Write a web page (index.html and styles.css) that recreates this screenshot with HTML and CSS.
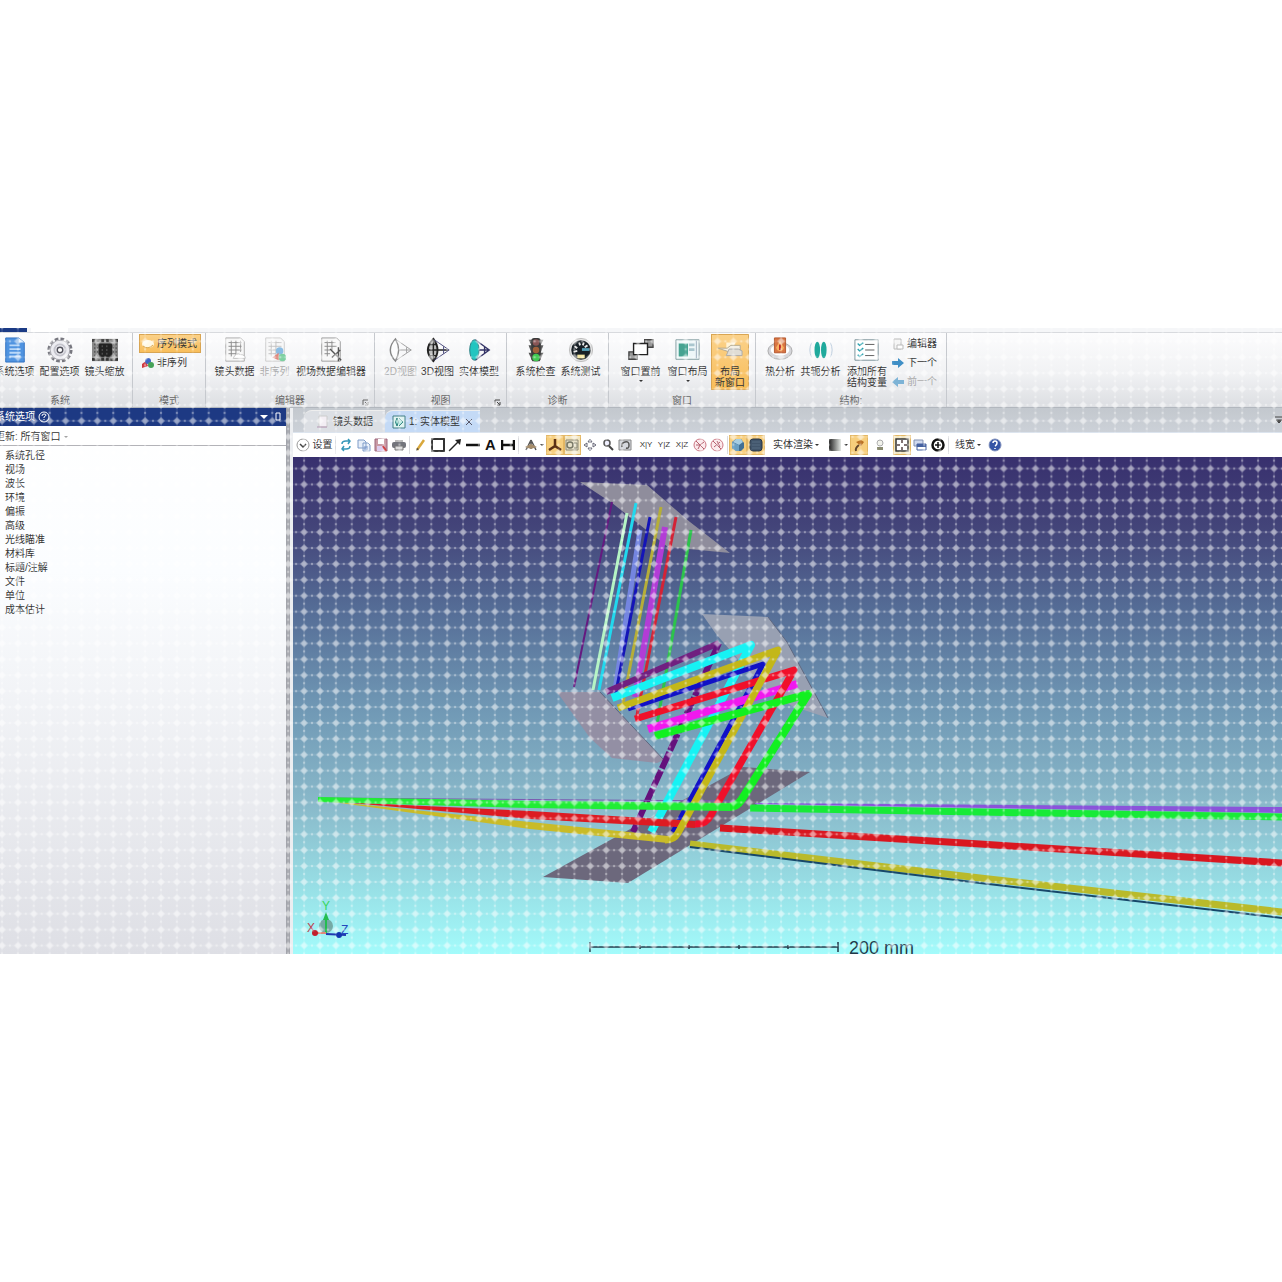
FILE: index.html
```html
<!DOCTYPE html>
<html lang="zh-Hans">
<head>
<meta charset="utf-8">
<title>实体模型</title>
<link rel="stylesheet" href="styles.css">
</head>
<body>
<div class="app">
  <div class="menu-strip"><span class="menu-file"></span><span class="menu-active"></span></div>
  <header class="ribbon">
    <section class="group g-system">
      <div class="tools">
        <button class="tool"><svg class="ico" viewBox="0 0 28 28"><path d="M4 1h14l6 5v21H4z" fill="#4f93e0" stroke="#2f6fc0"/><path d="M18 1v5h6z" fill="#d5e8fb"/><path d="M8 9h11M8 13h12M8 17h12M8 21h12" stroke="#b9d8f8" stroke-width="2"/></svg><span>系统选项</span></button>
        <button class="tool"><svg class="ico" viewBox="0 0 28 28"><circle cx="14" cy="14" r="12" fill="none" stroke="#77777f" stroke-width="3" stroke-dasharray="4 2.3"/><circle cx="14" cy="14" r="10.5" fill="#ececf1" stroke="#a0a0a8"/><circle cx="14" cy="14" r="6" fill="none" stroke="#c4c4cc" stroke-width="2"/><circle cx="14" cy="14" r="3" fill="#fff" stroke="#52525c" stroke-width="1.5"/></svg><span>配置选项</span></button>
        <button class="tool"><svg class="ico" viewBox="0 0 28 28"><path d="M0 2h28v24H0z" fill="#888"/><path d="M7 7h15v15H7z" fill="#222"/><path d="M0 4h28M0 24h28" stroke="#333" stroke-width="3" stroke-dasharray="3 2"/><path d="M3 7v15M6 7v15M23 7v15M26 7v15" stroke="#444" stroke-dasharray="2 2"/><path d="M11 9v11M16 9v11" stroke="#666" stroke-dasharray="2 2"/></svg><span>镜头缩放</span></button>
      </div>
      <h2>系统</h2>
    </section>
    <section class="group g-mode">
      <div class="stack">
        <button class="row selected"><svg class="mini" viewBox="0 0 12 12"><ellipse cx="6" cy="6" rx="6" ry="4" fill="#fff8e4"/><path d="M1 8q5 4 10-1" fill="none" stroke="#d9a850"/></svg><span>序列模式</span></button>
        <button class="row"><svg class="mini" viewBox="0 0 12 12"><path d="M0 7l4-3 2 5-6 2z" fill="#cf3940"/><circle cx="6" cy="4" r="3" fill="#3f66c4"/><circle cx="9" cy="8" r="3" fill="#45a258"/></svg><span>非序列</span></button>
      </div>
      <h2>模式</h2>
    </section>
    <section class="group g-editor">
      <div class="tools">
        <button class="tool"><svg class="ico" viewBox="0 0 28 28"><path d="M4 1h16l4 4v21H4z" fill="#f7f7f7" stroke="#aaa"/><path d="M7 6h14M7 10h14M7 14h14M7 18h8M10 4v17M15 4v17M20 4v12" stroke="#888"/><path d="M12 23q3-7 8-4 5 0 5 4z" fill="#fff" stroke="#bbb"/></svg><span>镜头数据</span></button>
        <button class="tool" disabled><svg class="ico" viewBox="0 0 28 28"><path d="M4 1h16l4 4v21H4z" fill="#f7f7f7" stroke="#bbb"/><path d="M7 6h14M7 10h14M7 14h14M7 18h8M10 4v17M15 4v17" stroke="#aaa"/><circle cx="19" cy="15" r="4" fill="#5da4da"/><path d="M11 22l7-5v8z" fill="#d85b4a"/><circle cx="22" cy="22" r="4" fill="#4cc07d"/></svg><span>非序列</span></button>
        <button class="tool"><svg class="ico" viewBox="0 0 28 28"><path d="M4 1h16l4 4v21H4z" fill="#f7f7f7" stroke="#999"/><path d="M7 6h12M7 10h13M7 14h6M7 18h6M10 4v17M15 4v10" stroke="#888"/><path d="M13 13l12 12M24 14l-9 8M22 11v15" stroke="#555" stroke-width="1.5"/></svg><span>视场数据编辑器</span></button>
      </div>
      <h2>编辑器</h2>
      <svg class="launcher" viewBox="0 0 7 7"><path d="M1 6V1h5M3 3l3 3V3M6 6H3" fill="none" stroke="#666"/></svg>
    </section>
    <section class="group g-view">
      <div class="tools">
        <button class="tool" disabled><svg class="ico" viewBox="0 0 28 28"><path d="M8 2q-11 12 0 24 7-12 0-24z" fill="#fff" stroke="#555" stroke-width="1.5"/><path d="M9 3l16 11L9 25M12 14h13M20 11v6" fill="none" stroke="#777"/></svg><span>2D视图</span></button>
        <button class="tool"><svg class="ico" viewBox="0 0 28 28"><path d="M9 2q-12 12 0 24 9-12 0-24z" fill="#bbb" stroke="#222" stroke-width="2"/><path d="M9 2v24M4 8h9M3 14h22M4 20h9" stroke="#222" stroke-width="1.5"/><path d="M10 3l16 11L10 25M20 10v8" fill="none" stroke="#447"/></svg><span>3D视图</span></button>
        <button class="tool"><svg class="ico" viewBox="0 0 28 28"><path d="M10 3l15 11L10 25M10 14h15M20 10v8" fill="none" stroke="#336" stroke-width="1.5"/><ellipse cx="9" cy="14" rx="5" ry="11" fill="#22c5c0" stroke="#267b80"/></svg><span>实体模型</span></button>
      </div>
      <h2>视图</h2>
      <svg class="launcher" viewBox="0 0 7 7"><path d="M1 6V1h5M3 3l3 3V3M6 6H3" fill="none" stroke="#444"/></svg>
    </section>
    <section class="group g-diag">
      <div class="tools">
        <button class="tool"><svg class="ico" viewBox="0 0 28 28"><path d="M6 3h16l-3 6h3l-3 8h3l-4 9h-8l-4-9h3L6 9h3z" fill="#555"/><rect x="9" y="1" width="10" height="25" rx="3" fill="#3b3b3b"/><circle cx="14" cy="6" r="3.5" fill="#855"/><circle cx="14" cy="14" r="3.5" fill="#a0603a"/><circle cx="14" cy="22" r="4" fill="#3fc850"/></svg><span>系统检查</span></button>
        <button class="tool"><svg class="ico" viewBox="0 0 28 28"><circle cx="14" cy="14" r="12.5" fill="#e4e4e4" stroke="#bbb"/><circle cx="14" cy="14" r="10.5" fill="#171f25"/><path d="M7 10l3 2M21 9l-3 2M6 16l4-1M12 6l1 3M17 6l-1 3" stroke="#e8e8e8" stroke-width="2"/><path d="M15 12h8v3h-8z" fill="#55a0b8"/><path d="M10 19h8v4h-8z" fill="#f5e7a0"/></svg><span>系统测试</span></button>
      </div>
      <h2>诊断</h2>
    </section>
    <section class="group g-window">
      <div class="tools">
        <button class="tool"><svg class="ico" viewBox="0 0 28 28"><path d="M18 3h9v8h-9zM1 16h9v8H1z" fill="#999" stroke="#444" stroke-width="1.5"/><path d="M6 7h15v12H6z" fill="#fff" stroke="#222" stroke-width="1.5"/></svg><span>窗口置前</span><i class="caret"></i></button>
        <button class="tool"><svg class="ico" viewBox="0 0 28 28"><path d="M1 3h25v21H1z" fill="#eef7f8" stroke="#7f9b9e"/><path d="M4 7h10v14H4z" fill="#46a391"/><path d="M15 7h6v3h-6zM15 12h6v3h-6z" fill="#a9c6ce"/><path d="M23 4v19" stroke="#9ab"/></svg><span>窗口布局</span><i class="caret"></i></button>
        <button class="tool selected"><svg class="ico" viewBox="0 0 28 28"><path d="M10 6h10l-3 6H10z" fill="#fff3d8"/><path d="M1 12h10l4-3h10v7H13z" fill="#f4f0e6" stroke="#b1a78f"/><path d="M10 20h17v-5l-4-2H13z" fill="#e0ddd5" stroke="#aaa"/></svg><span>布局<br>新窗口</span></button>
      </div>
      <h2>窗口</h2>
    </section>
    <section class="group g-struct">
      <div class="tools">
        <button class="tool"><svg class="ico" viewBox="0 0 28 28"><ellipse cx="14" cy="15" rx="13" ry="9" fill="#d6d6da" stroke="#aaa"/><ellipse cx="14" cy="14" rx="10" ry="6" fill="#fff"/><path d="M8 1h12v16H8z" fill="#d87543" stroke="#b2552c"/><path d="M14 4l4 7q0 4-4 4t-4-4z" fill="#f8b060"/><path d="M14 8v6" stroke="#b22" stroke-width="2"/></svg><span>热分析</span></button>
        <button class="tool"><svg class="ico" viewBox="0 0 28 28"><ellipse cx="10" cy="14" rx="3" ry="9" fill="#20a99c"/><ellipse cx="17" cy="14" rx="3" ry="9" fill="#20a99c"/><path d="M4 6q-4 8 0 16M24 6q4 8 0 16" fill="none" stroke="#bcd"/></svg><span>共轭分析</span></button>
        <button class="tool"><svg class="ico" viewBox="0 0 28 28"><path d="M1 3h25v22H1z" fill="#fff" stroke="#758c94"/><path d="M12 8h10M12 14h10M12 20h10" stroke="#555"/><path d="M4 7l2 2 4-3M4 13l2 2 4-3M4 19l2 2 4-3" fill="none" stroke="#25a0ae" stroke-width="1.5"/></svg><span>添加所有<br>结构变量</span></button>
        <div class="stack">
          <button class="row"><svg class="mini" viewBox="0 0 12 12"><path d="M2 1h7v10H2z" fill="#f5f5f5" stroke="#bbb"/><path d="M5 7h6v4H5z" fill="#fff" stroke="#bbb"/></svg><span>编辑器</span></button>
          <button class="row"><svg class="mini" viewBox="0 0 12 12"><path d="M0 4h6V1l6 5-6 5V8H0z" fill="#3f8fc6"/></svg><span>下一个</span></button>
          <button class="row" disabled><svg class="mini" viewBox="0 0 12 12"><path d="M12 4H6V1L0 6l6 5V8h6z" fill="#4f9bcc"/></svg><span>前一个</span></button>
        </div>
      </div>
      <h2>结构:</h2>
    </section>
  </header>

  <div class="work">
    <aside class="side">
      <div class="side-title"><span>系统选项</span><svg class="help" viewBox="0 0 12 12"><circle cx="6" cy="6" r="5" fill="none" stroke="#fff"/><path d="M4 5q0-2 2-2t2 1q0 1-2 2v1M6 8v1" fill="none" stroke="#fff"/></svg><span class="fill"></span><svg class="pin" viewBox="0 0 22 12"><path d="M0 4h8L4 8z" fill="#fff"/><path d="M16 2h4v7h-4z" fill="none" stroke="#fff"/></svg></div>
      <div class="side-update"><button>更新: 所有窗口 <i class="caret"></i></button></div>
      <ul class="side-list">
        <li>系统孔径</li><li>视场</li><li>波长</li><li>环境</li><li>偏振</li><li>高级</li><li>光线瞄准</li><li>材料库</li><li>标题/注解</li><li>文件</li><li>单位</li><li>成本估计</li>
      </ul>
    </aside>
    <div class="splitter"></div>
    <main class="doc">
      <div class="tabs">
        <button class="tab"><svg class="tab-ico" viewBox="0 0 14 14"><path d="M3 1h8v11H3z" fill="#f3eef4" stroke="#ccc"/><path d="M1 12h10" stroke="#b598b5"/></svg><span>镜头数据</span></button>
        <button class="tab active"><svg class="tab-ico" viewBox="0 0 14 14"><path d="M1 1h12v12H1z" fill="#dff3f0" stroke="#437f86"/><path d="M5 3q-3 4 0 8q3-4 0-8zM7 3l4 4-4 4" fill="#8fdccf" stroke="#287f7b"/></svg><span>1: 实体模型</span><svg class="close" viewBox="0 0 8 8"><path d="M1 1l6 6M7 1L1 7" stroke="#556"/></svg></button>
        <span class="fill"></span><svg class="tab-more" viewBox="0 0 8 8"><path d="M1 1h7M2 4h6L5 7z" fill="#444" stroke="#444"/></svg>
      </div>
      <div class="toolbar">
        <button class="settings"><svg class="t" viewBox="0 0 14 14"><circle cx="7" cy="7" r="6" fill="#fff" stroke="#999"/><path d="M4 6l3 3 3-3" fill="none" stroke="#444" stroke-width="1.5"/></svg><span>设置</span></button>
        <span class="sep"></span>
        <div class="set w-file">
          <button aria-label="刷新"><svg class="t" viewBox="0 0 14 14"><path d="M3 6q0-3 4-3h3M9 1l2 2-2 3M11 8q0 3-4 3H4M5 8l-2 3 2 2" fill="none" stroke="#3597b8" stroke-width="1.5"/></svg></button>
          <button aria-label="复制"><svg class="t" viewBox="0 0 14 14"><path d="M1 2h6l2 2v6H1zM6 5h5l2 2v6H6z" fill="#e6eef9" stroke="#7f9cc8"/><path d="M7 9h4M7 11h4" stroke="#7090c8"/></svg></button>
          <button aria-label="保存"><svg class="t" viewBox="0 0 14 14"><path d="M1 1h12v12H1z" fill="#c99aa5" stroke="#9c667d"/><path d="M4 1h6v5H4z" fill="#fff"/><path d="M3 8h8v5H3z" fill="#dce"/><path d="M9 8l3 5" stroke="#c33" stroke-width="2"/></svg></button>
          <button aria-label="打印"><svg class="t" viewBox="0 0 14 14"><path d="M3 2h8v3H3z" fill="#bbb"/><rect x="0" y="4" width="14" height="6" rx="2" fill="#73757c"/><path d="M3 8h8v4H3z" fill="#ddd" stroke="#777"/></svg></button>
        </div>
        <span class="sep"></span>
        <div class="set w-draw">
          <button aria-label="铅笔"><svg class="t" viewBox="0 0 14 14"><path d="M4 12L11 2" stroke="#d9a83c" stroke-width="2.5"/><path d="M3 13l1-3 2 1z" fill="#444"/></svg></button>
          <button aria-label="矩形"><svg class="t" viewBox="0 0 14 14"><path d="M1 1h12v12H1z" fill="#fff" stroke="#333" stroke-width="2"/></svg></button>
          <button aria-label="箭头"><svg class="t" viewBox="0 0 14 14"><path d="M1 13L11 3" stroke="#222" stroke-width="1.5"/><path d="M7 2l6-1-1 6z" fill="#222"/></svg></button>
          <button aria-label="直线"><svg class="t" viewBox="0 0 14 14"><path d="M0 7h14" stroke="#111" stroke-width="2.5"/></svg></button>
          <button class="letter">A</button>
          <button aria-label="尺寸"><svg class="t" viewBox="0 0 14 14"><path d="M1 2v10M13 2v10M1 7h12" stroke="#111" stroke-width="2.5"/></svg></button>
        </div>
        <span class="sep"></span>
        <button class="drop" aria-label="相机"><svg class="t" viewBox="0 0 14 14"><path d="M7 2l-5 10M7 2l5 10M7 4v7" stroke="#555" stroke-width="1.5"/><path d="M1 9l6-3 6 3-6 2z" fill="#a58c6a"/></svg><i class="caret"></i></button>
        <div class="set w-nav">
          <button class="on" aria-label="坐标轴"><svg class="t" viewBox="0 0 14 14"><path d="M7 1v7L1 12M7 8l6 4" fill="none" stroke="#5a2f14" stroke-width="2.5"/></svg></button>
          <button class="on pale" aria-label="相机锁定"><svg class="t" viewBox="0 0 14 14"><path d="M1 2h12v10H1z" fill="#e6e0c8" stroke="#8e8874"/><circle cx="5" cy="7" r="3" fill="none" stroke="#776" stroke-width="1.5"/><path d="M9 5h3v5H9" fill="none" stroke="#887"/></svg></button>
          <button aria-label="平移"><svg class="t" viewBox="0 0 14 14"><path d="M7 1l2 3H5zM7 13l2-3H5zM1 7l3-2v4zM13 7l-3-2v4z" fill="#fff" stroke="#667"/></svg></button>
          <button aria-label="缩放"><svg class="t" viewBox="0 0 14 14"><circle cx="6" cy="5" r="3" fill="#eef" stroke="#555" stroke-width="1.5"/><path d="M8 8l4 4" stroke="#444" stroke-width="2"/></svg></button>
          <button aria-label="旋转"><svg class="t" viewBox="0 0 14 14"><path d="M1 2h12v10H1z" fill="#d5d8de" stroke="#888"/><path d="M4 9q-1-4 3-5t4 3-3 3" fill="none" stroke="#555" stroke-width="1.5"/></svg></button>
        </div>
        <div class="set w-plane"><button>X|Y</button><button>Y|Z</button><button>X|Z</button></div>
        <div class="set w-rot">
          <button aria-label="隐藏光线"><svg class="t" viewBox="0 0 14 14"><circle cx="7" cy="7" r="6" fill="#fbeaec" stroke="#cc7885"/><path d="M3 3l8 8M3 7h4l4-3M7 7l-2 4" stroke="#b4606e" fill="none"/></svg></button>
          <button aria-label="隐藏面"><svg class="t" viewBox="0 0 14 14"><circle cx="7" cy="7" r="6" fill="#fbeaec" stroke="#cc7885"/><path d="M3 3l8 8M4 9l6-5M7 3l3 6" stroke="#b4606e" fill="none"/></svg></button>
        </div>
        <span class="sep"></span>
        <div class="set w-solid">
          <button class="on" aria-label="立方体"><svg class="t" viewBox="0 0 14 14"><path d="M5 1h5l3 4v5l-3 3H5l-4-3V4z" fill="#426f94"/><path d="M5 1h5l2 3-4 3-6-3z" fill="#a6cde2"/><path d="M1 4l7 3v6H5l-4-3z" fill="#6aa0c4"/></svg></button>
          <button class="on" aria-label="背景"><svg class="t" viewBox="0 0 14 14"><rect x="1" y="1" width="12" height="12" rx="3" fill="#41556b" stroke="#263445"/><path d="M3 4h8M3 7h8M3 10h8" stroke="#566d82"/></svg></button>
        </div>
        <button class="drop render">实体渲染<i class="caret"></i></button>
        <button class="drop" aria-label="渐变"><svg class="t" viewBox="0 0 14 14"><defs><linearGradient id="shade"><stop stop-color="#222"/><stop offset="1" stop-color="#e4e8e4"/></linearGradient></defs><path d="M1 1h12v12H1z" fill="url(#shade)"/></svg><i class="caret"></i></button>
        <div class="set one"><button class="on" aria-label="画笔"><svg class="t" viewBox="0 0 14 14"><path d="M4 13q-1-3 3-6" fill="none" stroke="#63462a" stroke-width="2"/><path d="M4 4l5-2 3 2-3 4z" fill="#b96f22"/></svg></button></div>
        <div class="set one lamp"><button aria-label="灯光"><svg class="t" viewBox="0 0 14 14"><circle cx="7" cy="5" r="3" fill="#f2f3ec" stroke="#aaa"/><path d="M4 9h6v3H4z" fill="#8a8b70"/></svg></button></div>
        <div class="set w-fit">
          <button class="on pale" aria-label="适合窗口"><svg class="t" viewBox="0 0 14 14"><path d="M1 1h12v12H1z" fill="#fff" stroke="#333" stroke-width="1.5"/><path d="M7 2v3M7 9v3M2 7h3M9 7h3" stroke="#544" stroke-width="1.5"/></svg></button>
          <button aria-label="窗口层叠"><svg class="t" viewBox="0 0 14 14"><path d="M1 2h9v6H1z" fill="#cfd8ee" stroke="#8390b0"/><path d="M4 6h9v6H4z" fill="#fff" stroke="#4460a0"/><path d="M4 6h9v3H4z" fill="#4460a0"/></svg></button>
          <button aria-label="目标"><svg class="t" viewBox="0 0 14 14"><circle cx="7" cy="7" r="5.5" fill="#fff" stroke="#111" stroke-width="2.5"/><path d="M7 4v6M4 7h6" stroke="#111" stroke-width="1.5"/></svg></button>
        </div>
        <span class="sep"></span>
        <button class="drop width">线宽<i class="caret"></i></button>
        <div class="set one"><button aria-label="帮助"><svg class="t" viewBox="0 0 14 14"><circle cx="7" cy="7" r="6" fill="#3454a6" stroke="#8292bd"/><path d="M5 5q0-2 2-2t2 2-2 3M7 10v1" fill="none" stroke="#fff" stroke-width="1.5"/></svg></button></div>
      </div>
      <svg class="scene" viewBox="293 457 989 497" role="img" aria-label="实体模型">
        <defs><linearGradient id="sky" x1="0" y1="0" x2="0" y2="1"><stop stop-color="#38306e"/><stop offset=".14" stop-color="#434479"/><stop offset=".3" stop-color="#546b95"/><stop offset=".5" stop-color="#6f97b4"/><stop offset=".7" stop-color="#89b9ca"/><stop offset=".87" stop-color="#98e0e6"/><stop offset="1" stop-color="#a3fbfb"/></linearGradient></defs>
        <path d="M293 457h989v497H293z" fill="url(#sky)"/>
        <g fill="#8f8d9c">
          <path d="M580 482L647 485 690 522 730 553 668 547 612 503z"/>
          <path d="M702 614L768 617 787 642 828 718 792 706 765 690 716 634z" fill="#98a0b2"/>
          <path d="M557 692L600 692 664 760 657 763 612 758 590 738z" fill="#938fa4"/>
          <path d="M810 772L743 767 543 877 628 883z" fill="#6c687c"/>
          <path d="M768 617L787 642 828 718M600 692L664 760" fill="none" stroke="#5f6880"/>
        </g>
        <g fill="none" stroke-width="3">
          <path d="M612 502L574 687" stroke="#651a80" stroke-width="2"/>
          <path d="M627 513L593 690" stroke="#b4f4c4"/>
          <path d="M636 503L599 690" stroke="#20d8ee"/>
          <path d="M640 530L615 690" stroke="#7485e0" stroke-width="5"/>
          <path d="M650 517L615 697" stroke="#1414b8"/>
          <path d="M661 507L623 703" stroke="#b5ae38"/>
          <path d="M665 527L635 697" stroke="#b23cd6" stroke-width="6"/>
          <path d="M676 517L637 715" stroke="#d32336"/>
          <path d="M691 530L656 730" stroke="#2cc34c"/>
        </g>
        <g fill="none" stroke-linejoin="round">
          <path d="M606 692L719 643" stroke="#702080" stroke-width="6"/>
          <path d="M719 643L633 832" stroke="#64117c" stroke-width="6" stroke-dasharray="18 2"/>
          <path d="M755 803L1282 807V813L755 804z" fill="#8a54da"/>
          <path d="M318 798L735 801" stroke="#7b5ab0"/>
          <path d="M612 698L751 645 651 832" stroke="#16f2f4" stroke-width="8"/>
          <path d="M628 709L763 664 673 832" stroke="#1111c6" stroke-width="5"/>
          <path d="M648 729L797 684" stroke="#f018ee" stroke-width="8"/>
          <path d="M635 719L794 670 711 815Q706 825 695 824" stroke="#f0102a" stroke-width="7"/>
          <path d="M340 802L530 811 695 821V828L530 819z" fill="#dc1b22"/>
          <path d="M720 828L980 844 1282 863" stroke="#d91720" stroke-width="7"/>
          <path d="M618 708L778 650 678 833Q674 840 665 840" stroke="#c3b719" stroke-width="7"/>
          <path d="M318 800L530 822 668 836V843L530 829z" fill="#c9bb28"/>
          <path d="M690 844L980 878 1282 912" stroke="#b9ba2b" stroke-width="7"/>
          <path d="M690 847L980 883 1282 918" stroke="#174769" stroke-width="2"/>
          <path d="M655 736L808 694 742 799Q737 807 729 807" stroke="#12f020" stroke-width="8"/>
          <path d="M318 797L530 801 730 803V811L530 808 318 802z" fill="#20ed35"/>
          <path d="M750 808L980 812 1282 817" stroke="#18ea38" stroke-width="7"/>
        </g>
        <g font-family="Liberation Sans, Arial, sans-serif" font-size="12">
          <circle cx="326" cy="926" r="7" fill="#76aaa5"/>
          <path d="M326 933V914" stroke="#24bd50" stroke-width="2"/><path d="M323 920l3-8 3 8z" fill="#24bd50"/>
          <path d="M315 933h11" stroke="#d87" stroke-width="2"/><circle cx="315" cy="933" r="3" fill="#c21e2c"/>
          <path d="M326 934l20 1" stroke="#2038b0" stroke-width="2"/><circle cx="339" cy="935" r="3" fill="#1236b0"/>
          <text x="322" y="910" fill="#37d65c">Y</text><text x="307" y="932" fill="#bd4050">X</text><text x="341" y="934" fill="#2448bd">Z</text>
        </g>
        <path d="M590 947h248M590 942v10M640 945v4M689 945v4M739 945v4M788 945v4M838 942v10" stroke="#203848" stroke-width="1.5"/>
        <text x="849" y="954" font-family="Liberation Sans, Arial, sans-serif" font-size="18" fill="#203848">200 mm</text>
      </svg>
    </main>
  </div>
  <svg class="mesh" aria-hidden="true">
    <defs><pattern id="lattice" width="15.9" height="15.9" patternUnits="userSpaceOnUse" x="-6" y="5.4">
      <path d="M8 0v16M0 8h16" stroke="#fff" stroke-opacity=".16"/>
      <path d="M8 4L12 8 8 12 4 8z" fill="#fff" fill-opacity=".36"/>
      <circle cx="8" cy="8" r="2.5" fill="#fff" fill-opacity=".22"/>
      <circle cx="0" cy="8" r="1.2" fill="#fff" fill-opacity=".36"/><circle cx="15.9" cy="8" r="1.2" fill="#fff" fill-opacity=".36"/>
      <circle cx="8" cy="0" r="1.2" fill="#fff" fill-opacity=".36"/><circle cx="8" cy="15.9" r="1.2" fill="#fff" fill-opacity=".36"/>
    </pattern></defs>
    <rect width="100%" height="100%" fill="url(#lattice)"/>
  </svg>
</div>
</body>
</html>
```
FILE: styles.css
```css
* { box-sizing: border-box; }
body {
  margin: 0;
  padding-top: 328px;
  background: #fff;
  color: #333;
  font: 10px/12px "Liberation Sans", "Noto Sans CJK SC", sans-serif;
  overflow-x: hidden;
}
button { border: 0; margin: 0; padding: 0; background: none; color: inherit; font: inherit; white-space: nowrap; }
button:disabled { color: #aaa; }
button:disabled svg { opacity: .7; }
svg { display: block; flex: none; }
h2 { margin: 0; font: inherit; color: #666; text-align: center; }
.app { position: relative; overflow: hidden; }
.mesh { position: absolute; inset: 0; width: 100%; height: 100%; pointer-events: none; }
.fill { flex: 1; }
.caret { display: inline-block; border: 2px solid transparent; border-top-color: #333; border-bottom: 0; }

.menu-strip { display: flex; gap: 4px; height: 4px; background: #f5f6f8; }
.menu-file { width: 27px; background: #1b3a85; }
.menu-active { width: 37px; background: #fff; }

.ribbon {
  display: flex;
  height: 76px;
  border-top: 1px solid #d8dade;
  border-bottom: 1px solid #b2b7be;
  background: linear-gradient(#fcfcfd, #f1f2f4 55%, #dcdee2);
}
.group {
  position: relative;
  display: flex;
  flex: none;
  flex-direction: column;
  justify-content: space-between;
  padding: 1px 0 0;
  border-right: 1px solid #c6c9ce;
}
.tools { display: grid; align-items: start; justify-content: start; }
.g-system { width: 141px; margin-left: -8px; }
.g-system .tools { grid-template-columns: repeat(3, 45px); }
.g-system h2 { padding-right: 4px; }
.g-mode { width: 73px; }
.g-editor { width: 169px; }
.g-editor .tools { grid-template-columns: 45px 35px 78px; padding-left: 6px; }
.g-view { width: 132px; }
.g-view .tools { grid-template-columns: 35px 39px 44px; padding-left: 8px; }
.g-diag { width: 102px; }
.g-diag .tools { grid-template-columns: 45px 45px; padding-left: 6px; }
.g-window { width: 147px; }
.g-window .tools { grid-template-columns: 47px 47px 38px; padding-left: 8px; }
.g-struct { width: 191px; }
.g-struct .tools { grid-template-columns: 34px 47px 46px 48px; padding-left: 7px; }
.tool { display: flex; flex-direction: column; align-items: center; min-width: 0; line-height: 11px; gap: 3px; padding-top: 3px; }
.tool span { display: block; }
.ico { width: 26px; height: 26px; }
.selected { background: linear-gradient(#fbd28b, #f8bd59); outline: 1px solid #d9a552; outline-offset: -1px; }
.tool.selected { padding-bottom: 2px; }
.launcher { position: absolute; right: 5px; bottom: 1px; width: 7px; height: 7px; }
.stack { display: flex; flex-direction: column; padding: 0 4px 0 6px; }
.g-struct .stack { padding: 0 0 0 2px; }
.row { display: flex; align-items: center; gap: 3px; height: 19px; padding: 0 3px; }
.g-struct .row { padding: 0; }
.mini { width: 12px; height: 12px; }

.work { display: flex; }
.side { display: flex; flex: none; flex-direction: column; width: 286px; background: linear-gradient(#fff 0, #fbfdff 30%, #dedfe5); }
.side-title { display: flex; align-items: center; gap: 3px; height: 18px; padding: 0 4px 0 0; background: #1d3983; color: #fff; }
.side-title > span:first-child { margin-left: -5px; }
.help { width: 12px; height: 12px; }
.pin { width: 22px; height: 12px; }
.side-update { height: 20px; border-bottom: 1px solid #b3b3b8; background: #fff; }
.side-update button { display: flex; align-items: center; gap: 3px; height: 22px; margin-left: -5px; }
.side-list { margin: 0; padding: 3px 5px; list-style: none; line-height: 14px; }
.splitter { flex: none; width: 7px; border-left: 4px solid #a2a4ab; background: #eceef1; }

.doc { flex: 1; min-width: 0; }
.tabs { display: flex; align-items: end; height: 25px; padding: 0 0 0 11px; background: linear-gradient(#c3c8ce, #ccd1d8); border-bottom: 1px solid #dce4ee; }
.tab { display: flex; align-items: center; justify-content: center; gap: 3px; height: 22px; width: 81px; background: #dcdfe4; border-radius: 8px 0 0 0; border-top: 1px solid #eee; }
.tab.active { width: 95px; background: #c4daf6; }
.tab-ico { width: 14px; height: 14px; }
.close { width: 8px; height: 8px; margin-left: 2px; }
.tab-more { width: 8px; height: 8px; margin: 0 0 8px; }

.toolbar { display: flex; align-items: center; height: 24px; padding-left: 1px; background: #fff; }
.toolbar button { display: flex; align-items: center; justify-content: center; height: 20px; }
.settings { width: 40px; gap: 3px; }
.toolbar .sep { width: 1px; height: 18px; margin: 0 1px; background: #d9dade; }
.set { display: flex; flex: none; }
.set button { flex: 1; min-width: 0; }
.t { width: 14px; height: 14px; }
.w-file { width: 71px; }
.w-draw { width: 106px; }
.w-nav { width: 88px; }
.w-plane { width: 54px; margin-left: 3px; }
.w-plane button { font-size: 8px; }
.w-rot { width: 35px; }
.w-solid { width: 36px; }
.one { width: 18px; }
.lamp { margin: 0 4px 0 3px; }
.w-fit { width: 54px; }
.letter { font-size: 15px; font-weight: bold; color: #111; }
.drop { flex: none; gap: 2px; width: 24px; margin-left: 2px; }
.render { width: 56px; margin-left: 3px; }
.width { width: 32px; margin-right: 2px; }
.on { background: #f7ce7c; outline: 1px solid #e3b662; outline-offset: -1px; }
.pale { background: #f1e4bd; }
.scene { width: 100%; height: auto; }
```
